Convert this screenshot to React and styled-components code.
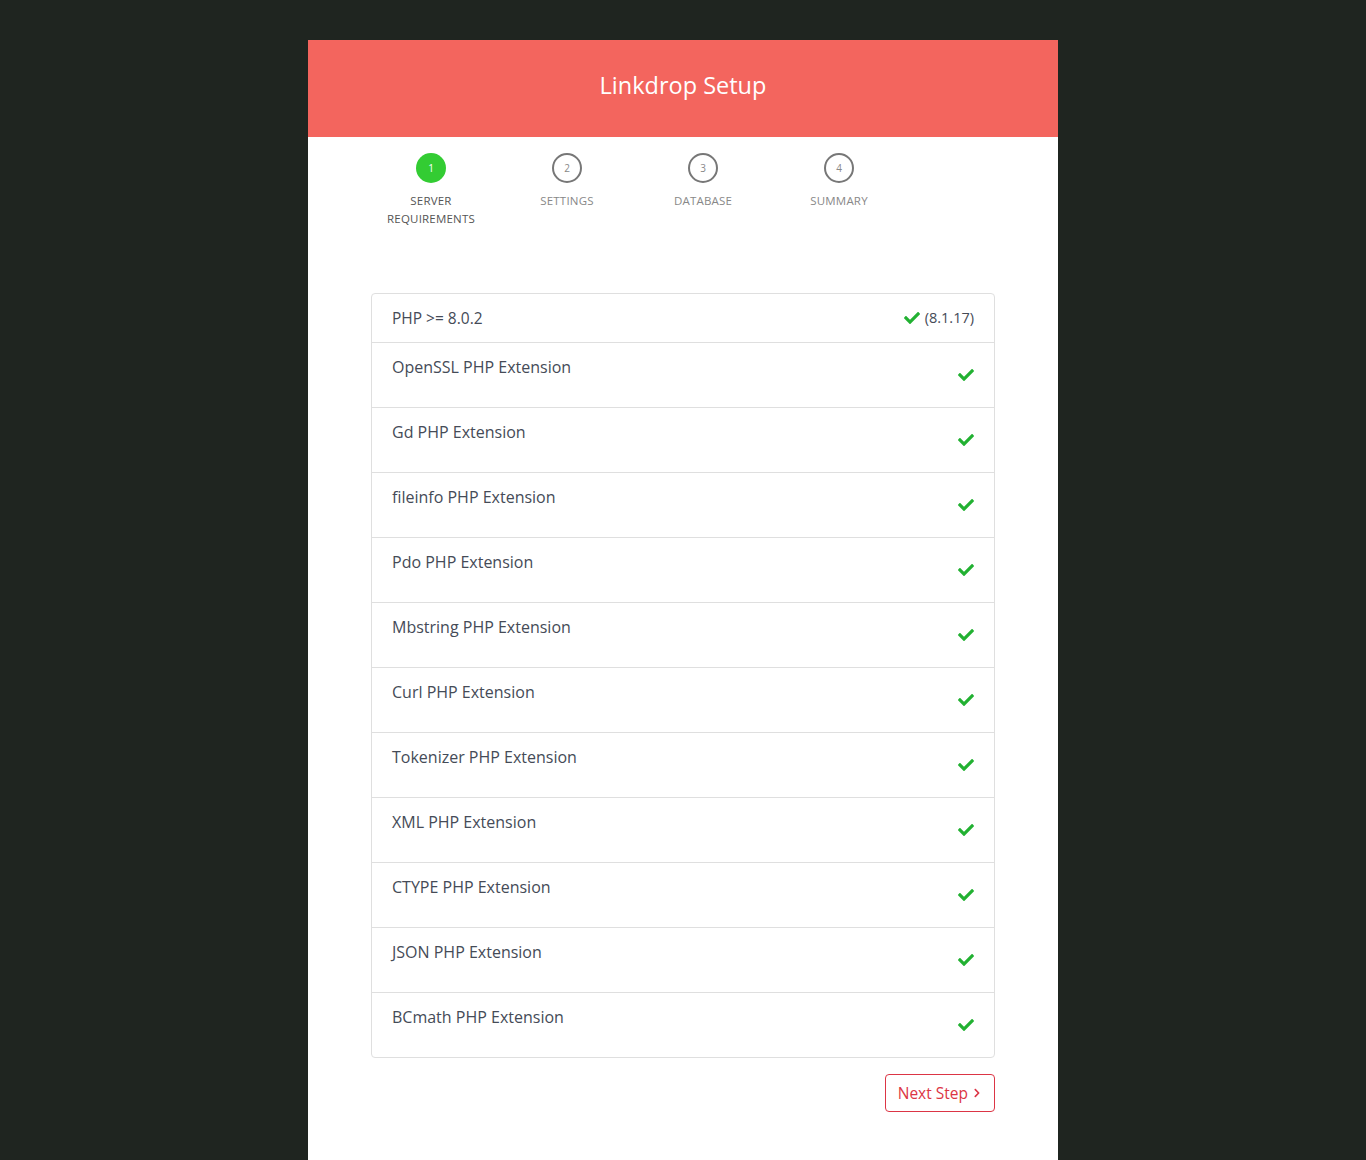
import styled, { createGlobalStyle } from "styled-components";
import { FaCheck, FaChevronRight } from "react-icons/fa";

const GlobalStyle = createGlobalStyle`
  body {
    margin: 0;
    background: #1f2520;
    font-family: "Open Sans", "Liberation Sans", sans-serif;
  }
`;

const Page = styled.div`
  padding-top: 40px;
`;

const Card = styled.div`
  width: 750px;
  margin: 0 auto;
  background: #fff;
  min-height: 1160px;
`;

const Header = styled.div`
  height: 97px;
  box-sizing: border-box;
  padding-bottom: 8px;
  background: #f3655e;
  color: #fff;
  display: flex;
  align-items: center;
  justify-content: center;
  font-size: 23.5px;
  font-weight: 400;
`;

const Steps = styled.div`
  display: flex;
  padding: 16px 55px 0;
`;

const Step = styled.div`
  width: 136px;
  display: flex;
  flex-direction: column;
  align-items: center;
`;

const Circle = styled.div`
  width: 30px;
  height: 30px;
  box-sizing: border-box;
  border-radius: 50%;
  border: ${(p) => (p.$active ? "none" : "2px solid #777")};
  background: ${(p) => (p.$active ? "#33cc33" : "#fff")};
  color: ${(p) => (p.$active ? "#fff" : "#888")};
  font-size: 10px;
  display: flex;
  align-items: center;
  justify-content: center;
`;

const StepLabel = styled.div`
  margin-top: 9px;
  font-size: 11.5px;
  line-height: 18px;
  text-align: center;
  color: ${(p) => (p.$active ? "#555" : "#888")};
  letter-spacing: 0.2px;
`;

const Body = styled.div`
  padding: 65px 63px 40px;
`;

const List = styled.div`
  border: 1px solid #dfdfdf;
  border-radius: 4px;
`;

const Row = styled.div`
  display: flex;
  justify-content: space-between;
  align-items: ${(p) => (p.$first ? "center" : "flex-start")};
  padding: ${(p) => (p.$first ? "12px 20px" : "12px 20px 0")};
  height: ${(p) => (p.$first ? "24px" : "52px")};
  font-size: ${(p) => (p.$first ? "15.5px" : "16px")};
  line-height: 24px;
  color: #454b57;
  & + & {
    border-top: 1px solid #dfdfdf;
  }
`;

const Check = styled(FaCheck)`
  color: #22b132;
  font-size: 16px;
  margin-top: ${(p) => (p.$low ? "12px" : "0")};
`;

const Version = styled.span`
  display: flex;
  align-items: center;
  gap: 5px;
  font-size: 14.5px;
`;

const Footer = styled.div`
  display: flex;
  justify-content: flex-end;
  margin-top: 16px;
`;

const NextButton = styled.button`
  height: 38px;
  padding: 0 12px;
  border: 1px solid #dc3545;
  border-radius: 4px;
  background: #fff;
  color: #dc3545;
  font-family: inherit;
  font-size: 15.5px;
  display: flex;
  align-items: center;
  gap: 4px;
`;

const steps = [
  { n: 1, label: ["SERVER", "REQUIREMENTS"], active: true },
  { n: 2, label: ["SETTINGS"] },
  { n: 3, label: ["DATABASE"] },
  { n: 4, label: ["SUMMARY"] },
];

const extensions = [
  "OpenSSL",
  "Gd",
  "fileinfo",
  "Pdo",
  "Mbstring",
  "Curl",
  "Tokenizer",
  "XML",
  "CTYPE",
  "JSON",
  "BCmath",
];

export default function App() {
  return (
    <Page>
      <GlobalStyle />
      <Card>
        <Header>Linkdrop Setup</Header>
        <Steps>
          {steps.map((s) => (
            <Step key={s.n}>
              <Circle $active={s.active}>{s.n}</Circle>
              <StepLabel $active={s.active}>
                {s.label.map((l) => (
                  <div key={l}>{l}</div>
                ))}
              </StepLabel>
            </Step>
          ))}
        </Steps>
        <Body>
          <List>
            <Row $first>
              <span>PHP &gt;= 8.0.2</span>
              <Version>
                <Check />
                (8.1.17)
              </Version>
            </Row>
            {extensions.map((e) => (
              <Row key={e}>
                <span>{e} PHP Extension</span>
                <Check $low />
              </Row>
            ))}
          </List>
          <Footer>
            <NextButton>
              Next Step <FaChevronRight size={10} />
            </NextButton>
          </Footer>
        </Body>
      </Card>
    </Page>
  );
}
